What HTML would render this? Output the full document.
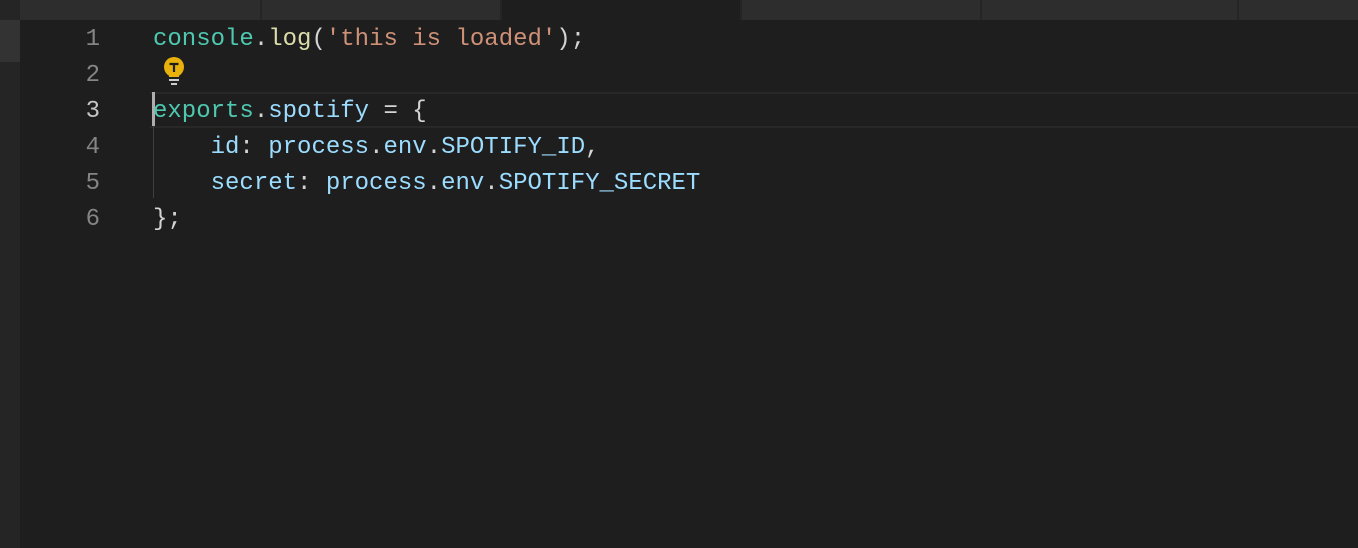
<!DOCTYPE html>
<html><head><style>
body{margin:0;width:1358px;height:548px;background:#1e1e1e;overflow:hidden;position:relative;font-family:"Liberation Mono",monospace;}
.tab{position:absolute;top:0;height:20px;background:#2d2d2d;}
.ln{position:absolute;left:40px;width:60px;text-align:right;color:#858585;font-size:24px;line-height:36px;}
.code{position:absolute;left:153px;font-size:24px;line-height:36px;white-space:pre;color:#d4d4d4;}
.g{color:#4ec9b0}.y{color:#dcdcaa}.s{color:#ce9178}.b{color:#9cdcfe}
</style></head><body>
<div style="position:absolute;left:0;top:0;width:20px;height:548px;background:#252526"></div>
<div style="position:absolute;left:0;top:20px;width:20px;height:42px;background:#333"></div>
<div style="position:absolute;left:20px;top:0;width:1338px;height:20px;background:#252526"></div>
<div class="tab" style="left:20px;width:240px"></div>
<div class="tab" style="left:262px;width:238px"></div>
<div class="tab" style="left:502px;width:238px;background:#1e1e1e"></div>
<div class="tab" style="left:742px;width:238px"></div>
<div class="tab" style="left:982px;width:255px"></div>
<div class="tab" style="left:1239px;width:119px"></div>
<div style="position:absolute;left:150px;right:0;top:92px;height:32px;border-top:2px solid #282828;border-bottom:2px solid #282828"></div>
<div style="position:absolute;left:152px;top:92px;width:3px;height:34px;background:#aeafad"></div>
<div style="position:absolute;left:153px;top:126px;width:1px;height:72px;background:#404040"></div>
<div class="ln" style="top:22px">1</div>
<div class="ln" style="top:58px">2</div>
<div class="ln" style="top:94px;color:#c6c6c6">3</div>
<div class="ln" style="top:130px">4</div>
<div class="ln" style="top:166px">5</div>
<div class="ln" style="top:202px">6</div>
<svg style="position:absolute;left:162px;top:57px" width="24" height="30" viewBox="0 0 24 30"><circle cx="12" cy="10" r="10" fill="#e8b10b"/><rect x="7" y="15" width="10" height="5" fill="#e8b10b"/><path d="M7.5 7h9M12 7v8" stroke="#1e1e1e" stroke-width="2.2"/><rect x="7" y="22" width="10" height="2" fill="#ccc"/><rect x="9" y="26" width="6" height="2" fill="#ccc"/></svg>
<div class="code" style="top:22px"><span class="g">console</span>.<span class="y">log</span>(<span class="s">'this is loaded'</span>);</div>
<div class="code" style="top:94px"><span class="g">exports</span>.<span class="b">spotify</span> = {</div>
<div class="code" style="top:130px">    <span class="b">id</span>: <span class="b">process</span>.<span class="b">env</span>.<span class="b">SPOTIFY_ID</span>,</div>
<div class="code" style="top:166px">    <span class="b">secret</span>: <span class="b">process</span>.<span class="b">env</span>.<span class="b">SPOTIFY_SECRET</span></div>
<div class="code" style="top:202px">};</div>
</body></html>
